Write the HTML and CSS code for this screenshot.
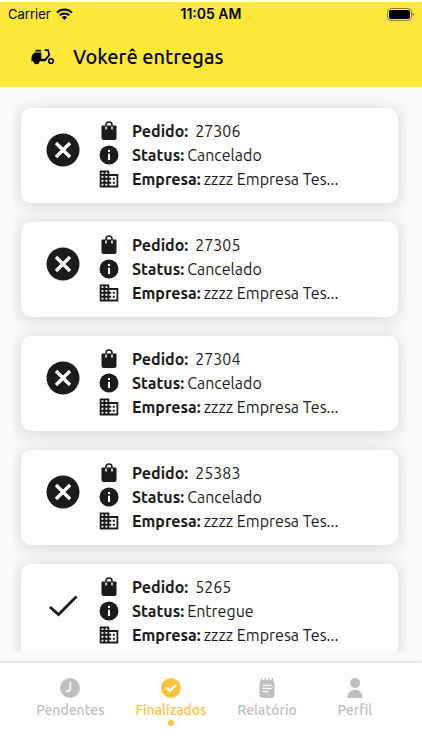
FILE: index.html
```html
<!DOCTYPE html>
<html lang="pt-BR">
<head>
<meta charset="utf-8">
<meta name="viewport" content="width=device-width, initial-scale=1">
<title>Vokerê entregas</title>
<link rel="stylesheet" href="styles.css">
</head>
<body>
<svg class="sprite" aria-hidden="true">
  <symbol id="cancel" viewBox="0 0 34 34"><circle cx="17" cy="17" r="16.500" fill="currentColor"/><path d="M10 10l14 14M24 10l-14 14" stroke="#fff" stroke-width="3.400"/></symbol>
  <symbol id="check" viewBox="0 0 34 34"><path d="M4 18l8.500 7.500L30.500 7.500" fill="none" stroke="currentColor" stroke-width="2.800"/></symbol>
  <symbol id="bag" viewBox="0 0 20 20"><path d="M3.500 4.500h13a1 1 0 0 1 1 1v11.500a2 2 0 0 1-2 2h-11a2 2 0 0 1-2-2V5.500a1 1 0 0 1 1-1z" fill="currentColor"/><path d="M7 5.500V4a3 3 0 0 1 6 0v1.500" fill="none" stroke="currentColor" stroke-width="1.600"/><path d="M7 5.500v3M13 5.500v3" stroke="#fff" stroke-width="1.500"/></symbol>
  <symbol id="info" viewBox="0 0 20 20"><circle cx="10" cy="10" r="9.500" fill="currentColor"/><path d="M9 5h2v2H9zM9 8.800h2V15H9z" fill="#fff"/></symbol>
  <symbol id="building" viewBox="0 0 20 20"><path fill="currentColor" fill-rule="evenodd" d="M.700 1.500h9.600v3.600h9V18.500H.700zM2.500 3.300v1.800h1.900V3.300zM6.400 3.300v1.800h2V3.300zM2.500 7v1.800h1.900V7zM6.400 7v1.800h2V7zM2.500 10.800v1.900h1.900v-1.900zM6.400 10.800v1.900h2v-1.900zM2.500 14.700v1.900h1.900v-1.900zM6.400 14.700v1.900h2v-1.900zM10.300 6.900v1.900h1.900v2h-1.900v1.900h1.900v2h-1.900v1.900h7.200V6.900z"/><path fill="currentColor" d="M13.800 8.800h2v2h-2zM13.800 12.700h2v2h-2z"/></symbol>
</svg>

<header class="top">
  <div class="statusbar">
    <div class="carrier">
      <span>Carrier</span>
      <svg class="wifi" viewBox="0 0 17 12" aria-hidden="true"><path d="M1 4.600a10.700 10.700 0 0 1 15 0M3.700 7.300a7 7 0 0 1 9.600 0" fill="none" stroke="currentColor" stroke-width="2"/><path d="M8.500 12L5.800 9.200a4 4 0 0 1 5.400 0z" fill="currentColor"/></svg>
    </div>
    <time class="clock">11:05 AM</time>
    <svg class="battery" viewBox="0 0 27 13" aria-hidden="true"><rect x=".5" y=".5" width="24" height="12" rx="3.500" fill="none" stroke="#8f8222"/><rect x="2" y="2" width="21" height="9" rx="2" fill="#000"/><path d="M25.500 4.500v4q1.300-.600 1.300-2t-1.300-2z" fill="#8f8222"/></svg>
  </div>
  <div class="titlebar">
    <svg class="scooter" viewBox="0 0 24 18" aria-hidden="true"><path d="M5 1.800h5.500v1.700H5z"/><path d="M4.500 4.500h6.300v6.300h3.400L17.800 7 17 3H14.200V1.300h4L19.700 7.200 15 13.200H1V10.500q0-4.500 3.500-6z"/><circle cx="6" cy="13.200" r="3"/><circle cx="20.500" cy="13" r="2.300" fill="none" stroke="#000" stroke-width="1.600"/></svg>
    <h1>Vokerê entregas</h1>
  </div>
</header>

<main class="orders">
  <ul class="list">
    <li class="card">
      <svg class="state" role="img" aria-label="Cancelado"><use href="#cancel"/></svg>
      <div class="info">
        <p><svg><use href="#bag"/></svg><b>Pedido:</b><span class="number">27306</span></p>
        <p><svg><use href="#info"/></svg><b>Status:</b><span>Cancelado</span></p>
        <p><svg><use href="#building"/></svg><b>Empresa:</b><span>zzzz Empresa Tes...</span></p>
      </div>
    </li>
    <li class="card">
      <svg class="state" role="img" aria-label="Cancelado"><use href="#cancel"/></svg>
      <div class="info">
        <p><svg><use href="#bag"/></svg><b>Pedido:</b><span class="number">27305</span></p>
        <p><svg><use href="#info"/></svg><b>Status:</b><span>Cancelado</span></p>
        <p><svg><use href="#building"/></svg><b>Empresa:</b><span>zzzz Empresa Tes...</span></p>
      </div>
    </li>
    <li class="card">
      <svg class="state" role="img" aria-label="Cancelado"><use href="#cancel"/></svg>
      <div class="info">
        <p><svg><use href="#bag"/></svg><b>Pedido:</b><span class="number">27304</span></p>
        <p><svg><use href="#info"/></svg><b>Status:</b><span>Cancelado</span></p>
        <p><svg><use href="#building"/></svg><b>Empresa:</b><span>zzzz Empresa Tes...</span></p>
      </div>
    </li>
    <li class="card">
      <svg class="state" role="img" aria-label="Cancelado"><use href="#cancel"/></svg>
      <div class="info">
        <p><svg><use href="#bag"/></svg><b>Pedido:</b><span class="number">25383</span></p>
        <p><svg><use href="#info"/></svg><b>Status:</b><span>Cancelado</span></p>
        <p><svg><use href="#building"/></svg><b>Empresa:</b><span>zzzz Empresa Tes...</span></p>
      </div>
    </li>
    <li class="card">
      <svg class="state" role="img" aria-label="Entregue"><use href="#check"/></svg>
      <div class="info">
        <p><svg><use href="#bag"/></svg><b>Pedido:</b><span class="number">5265</span></p>
        <p><svg><use href="#info"/></svg><b>Status:</b><span>Entregue</span></p>
        <p><svg><use href="#building"/></svg><b>Empresa:</b><span>zzzz Empresa Tes...</span></p>
      </div>
    </li>
  </ul>
</main>

<nav class="tabs">
  <a href="#pendentes" class="tab">
    <svg viewBox="0 0 20 20" aria-hidden="true"><circle cx="10" cy="10" r="10" fill="currentColor"/><path d="M10.300 4.500v6.500q0 1.500-3.800 2.500" fill="none" stroke="#fff" stroke-width="1.800" stroke-linecap="round"/></svg>
    <span>Pendentes</span>
  </a>
  <a href="#finalizados" class="tab active" aria-current="page">
    <svg viewBox="0 0 20 20" aria-hidden="true"><circle cx="10" cy="10" r="10" fill="currentColor"/><path d="M6 10.200l2.900 2.700L14.300 7.500" fill="none" stroke="#fff" stroke-width="2.400" stroke-linecap="round" stroke-linejoin="round"/></svg>
    <span>Finalizados</span>
  </a>
  <a href="#relatorio" class="tab">
    <svg viewBox="0 0 20 20" aria-hidden="true"><rect x="2.500" y="2" width="15" height="18" rx="3.500" fill="currentColor"/><path d="M4.500 0v3M8.200 0v3M11.800 0v3M15.500 0v3" stroke="currentColor" stroke-width="1.400" stroke-linecap="round"/><path d="M6 7.300h8M6 10.500h8M6 13.700h4.500" stroke="#fff" stroke-width="1.300" stroke-linecap="round"/></svg>
    <span>Relatório</span>
  </a>
  <a href="#perfil" class="tab">
    <svg viewBox="0 0 20 20" aria-hidden="true"><circle cx="10" cy="5" r="5" fill="currentColor"/><path d="M2.500 20v-1.500a7.500 6.800 0 0 1 15 0V20z" fill="currentColor"/></svg>
    <span>Perfil</span>
  </a>
</nav>
</body>
</html>
```
FILE: styles.css
```css
* {
  box-sizing: border-box;
}

body {
  margin: 0;
  height: 100vh;
  display: flex;
  flex-direction: column;
  overflow: hidden;
  background: #fafafa;
  color: #1b1b1b;
  font-family: Ubuntu, "Noto Sans", "Open Sans", sans-serif;
}

.sprite {
  display: none;
}

.top {
  flex: none;
  border-top: 2px solid #fdfbe9;
  background: #fee839;
  color: #000;
}

.statusbar {
  display: grid;
  grid-template-columns: 1fr auto 1fr;
  align-items: center;
  height: 24px;
  padding: 0 8px;
  font: 13px/24px Inter, "Liberation Sans", sans-serif;
}

.carrier {
  display: flex;
  align-items: center;
  gap: 5px;
}

.wifi {
  width: 17px;
  height: 12px;
}

.clock {
  font-size: 14px;
  font-weight: 600;
}

.battery {
  justify-self: end;
  width: 27px;
  height: 13px;
}

.titlebar {
  display: flex;
  align-items: center;
  gap: 18px;
  height: 61px;
  padding: 0 30px;
}

.scooter {
  width: 25px;
  height: 18px;
}

h1 {
  margin: 0;
  font-size: 20px;
  font-weight: 500;
  line-height: 28px;
}

.orders {
  flex: 1;
  min-height: 0;
  margin: 0 15px 11px 13px;
  overflow: hidden;
}

.list {
  display: flex;
  flex-direction: column;
  gap: 19px;
  margin: 0;
  padding: 21px 9px 21px 8px;
  list-style: none;
}

.card {
  display: flex;
  align-items: center;
  gap: 19px;
  padding: 11px 25px 12px;
  border-radius: 10px;
  background: #fff;
  box-shadow: 0 2px 18px rgba(0, 0, 0, 0.16);
}

.state {
  flex: none;
  width: 34px;
  height: 34px;
  margin-bottom: 10px;
}

.info {
  min-width: 0;
}

.info p {
  display: flex;
  align-items: center;
  margin: 0;
  font-size: 16px;
  line-height: 24px;
  white-space: nowrap;
}

.info svg {
  flex: none;
  width: 20px;
  height: 20px;
  margin-right: 13px;
}

.info b {
  margin-right: 3px;
}

.info .number {
  margin-left: 4px;
}

.tabs {
  flex: none;
  display: flex;
  justify-content: center;
  gap: 31px;
  height: 87px;
  padding: 15px 4px 0 0;
  background: #fff;
  box-shadow: 0 -1px 3px rgba(0, 0, 0, 0.16);
}

.tab {
  display: flex;
  flex-direction: column;
  align-items: center;
  min-width: 54px;
  color: #c0c0c0;
  font-size: 14px;
  font-weight: 500;
  line-height: 20px;
  text-decoration: none;
}

.tab svg {
  width: 20px;
  height: 20px;
  margin-bottom: 2px;
}

.active {
  color: #fdc23e;
}

.active::after {
  content: "";
  width: 6px;
  height: 6px;
  border-radius: 50%;
  background: currentColor;
}
```
